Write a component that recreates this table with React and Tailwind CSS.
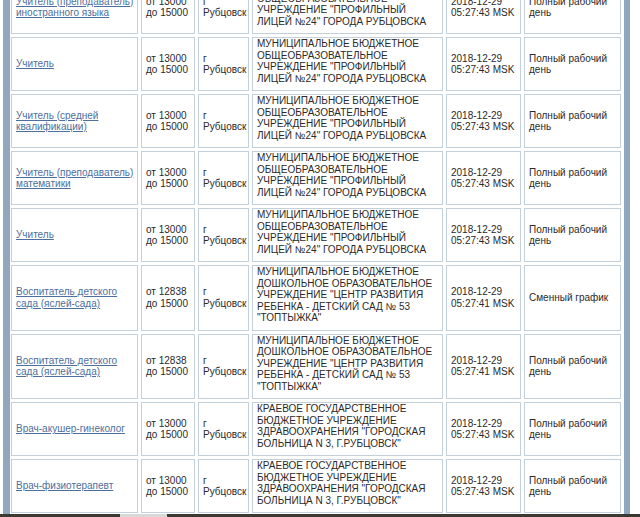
const SCHOOL = ['МУНИЦИПАЛЬНОЕ БЮДЖЕТНОЕ', 'ОБЩЕОБРАЗОВАТЕЛЬНОЕ', 'УЧРЕЖДЕНИЕ "ПРОФИЛЬНЫЙ', 'ЛИЦЕЙ №24" ГОРОДА РУБЦОВСКА'];
const KINDERGARTEN = ['МУНИЦИПАЛЬНОЕ БЮДЖЕТНОЕ', 'ДОШКОЛЬНОЕ ОБРАЗОВАТЕЛЬНОЕ', 'УЧРЕЖДЕНИЕ "ЦЕНТР РАЗВИТИЯ', 'РЕБЕНКА - ДЕТСКИЙ САД № 53', '"ТОПТЫЖКА"'];
const HOSPITAL = ['КРАЕВОЕ ГОСУДАРСТВЕННОЕ', 'БЮДЖЕТНОЕ УЧРЕЖДЕНИЕ', 'ЗДРАВООХРАНЕНИЯ "ГОРОДСКАЯ', 'БОЛЬНИЦА N 3, Г.РУБЦОВСК"'];

const FULL_DAY = ['Полный рабочий', 'день'];

const rows = [
    { title: ['Учитель (преподаватель)', 'иностранного языка'], salary: ['от 13000', 'до 15000'], org: SCHOOL, date: '05:27:43 MSK', mode: FULL_DAY },
    { title: ['Учитель'], salary: ['от 13000', 'до 15000'], org: SCHOOL, date: '05:27:43 MSK', mode: FULL_DAY },
    { title: ['Учитель (средней', 'квалификации)'], salary: ['от 13000', 'до 15000'], org: SCHOOL, date: '05:27:43 MSK', mode: FULL_DAY },
    { title: ['Учитель (преподаватель)', 'математики'], salary: ['от 13000', 'до 15000'], org: SCHOOL, date: '05:27:43 MSK', mode: FULL_DAY },
    { title: ['Учитель'], salary: ['от 13000', 'до 15000'], org: SCHOOL, date: '05:27:43 MSK', mode: FULL_DAY },
    { title: ['Воспитатель детского', 'сада (яслей-сада)'], salary: ['от 12838', 'до 15000'], org: KINDERGARTEN, date: '05:27:41 MSK', mode: ['Сменный график'] },
    { title: ['Воспитатель детского', 'сада (яслей-сада)'], salary: ['от 12838', 'до 15000'], org: KINDERGARTEN, date: '05:27:41 MSK', mode: FULL_DAY },
    { title: ['Врач-акушер-гинеколог'], salary: ['от 13000', 'до 15000'], org: HOSPITAL, date: '05:27:43 MSK', mode: FULL_DAY },
    { title: ['Врач-физиотерапевт'], salary: ['от 13000', 'до 15000'], org: HOSPITAL, date: '05:27:43 MSK', mode: FULL_DAY },
];

const Lines = ({ lines }) => (
    <div>
        {lines.map((l, i) => (
            <div key={i} className="whitespace-nowrap">{l}</div>
        ))}
    </div>
);

const Cell = ({ children }) => (
    <div className="border border-[#c3d0dc] bg-white px-[4px] flex items-center">{children}</div>
);

export default function App() {
    return (
        <div className="h-[517px] w-[640px] flex flex-col bg-white overflow-hidden" style={{ fontFamily: '"Liberation Sans", Arial, sans-serif' }}>
            <div className="flex-1 flex overflow-hidden">
                <div className="w-[3px]" />
                <div className="w-[7px] bg-[#91a7c0]" />
                <div className="w-[1px]" />
                <div className="-mt-[20px] h-fit grid grid-cols-[127px_54px_51px_191px_75px_97px] gap-[3px] text-[10px] leading-[11.5px] text-[#2a2a2a]">
                    {rows.map((r, i) => (
                        <div key={i} className="contents">
                            <Cell>
                                <a href="#" className="text-[#4d6f9e] underline">
                                    <Lines lines={r.title} />
                                </a>
                            </Cell>
                            <Cell><Lines lines={r.salary} /></Cell>
                            <Cell><Lines lines={['г', 'Рубцовск']} /></Cell>
                            <div className="border border-[#c3d0dc] bg-white px-[4px] pt-0 pb-[6px]">
                                <Lines lines={r.org} />
                            </div>
                            <Cell><Lines lines={['2018-12-29', r.date]} /></Cell>
                            <Cell><Lines lines={r.mode} /></Cell>
                        </div>
                    ))}
                </div>
                <div className="w-[3px]" />
                <div className="w-[6px] bg-[#91a7c0]" />
                <div className="flex-1" />
            </div>
            <div className="h-[3px] flex bg-[#3c3834]">
                <div className="w-[120px]" />
                <div className="w-[47px] bg-[#d9d9d9]" />
            </div>
        </div>
    );
}
